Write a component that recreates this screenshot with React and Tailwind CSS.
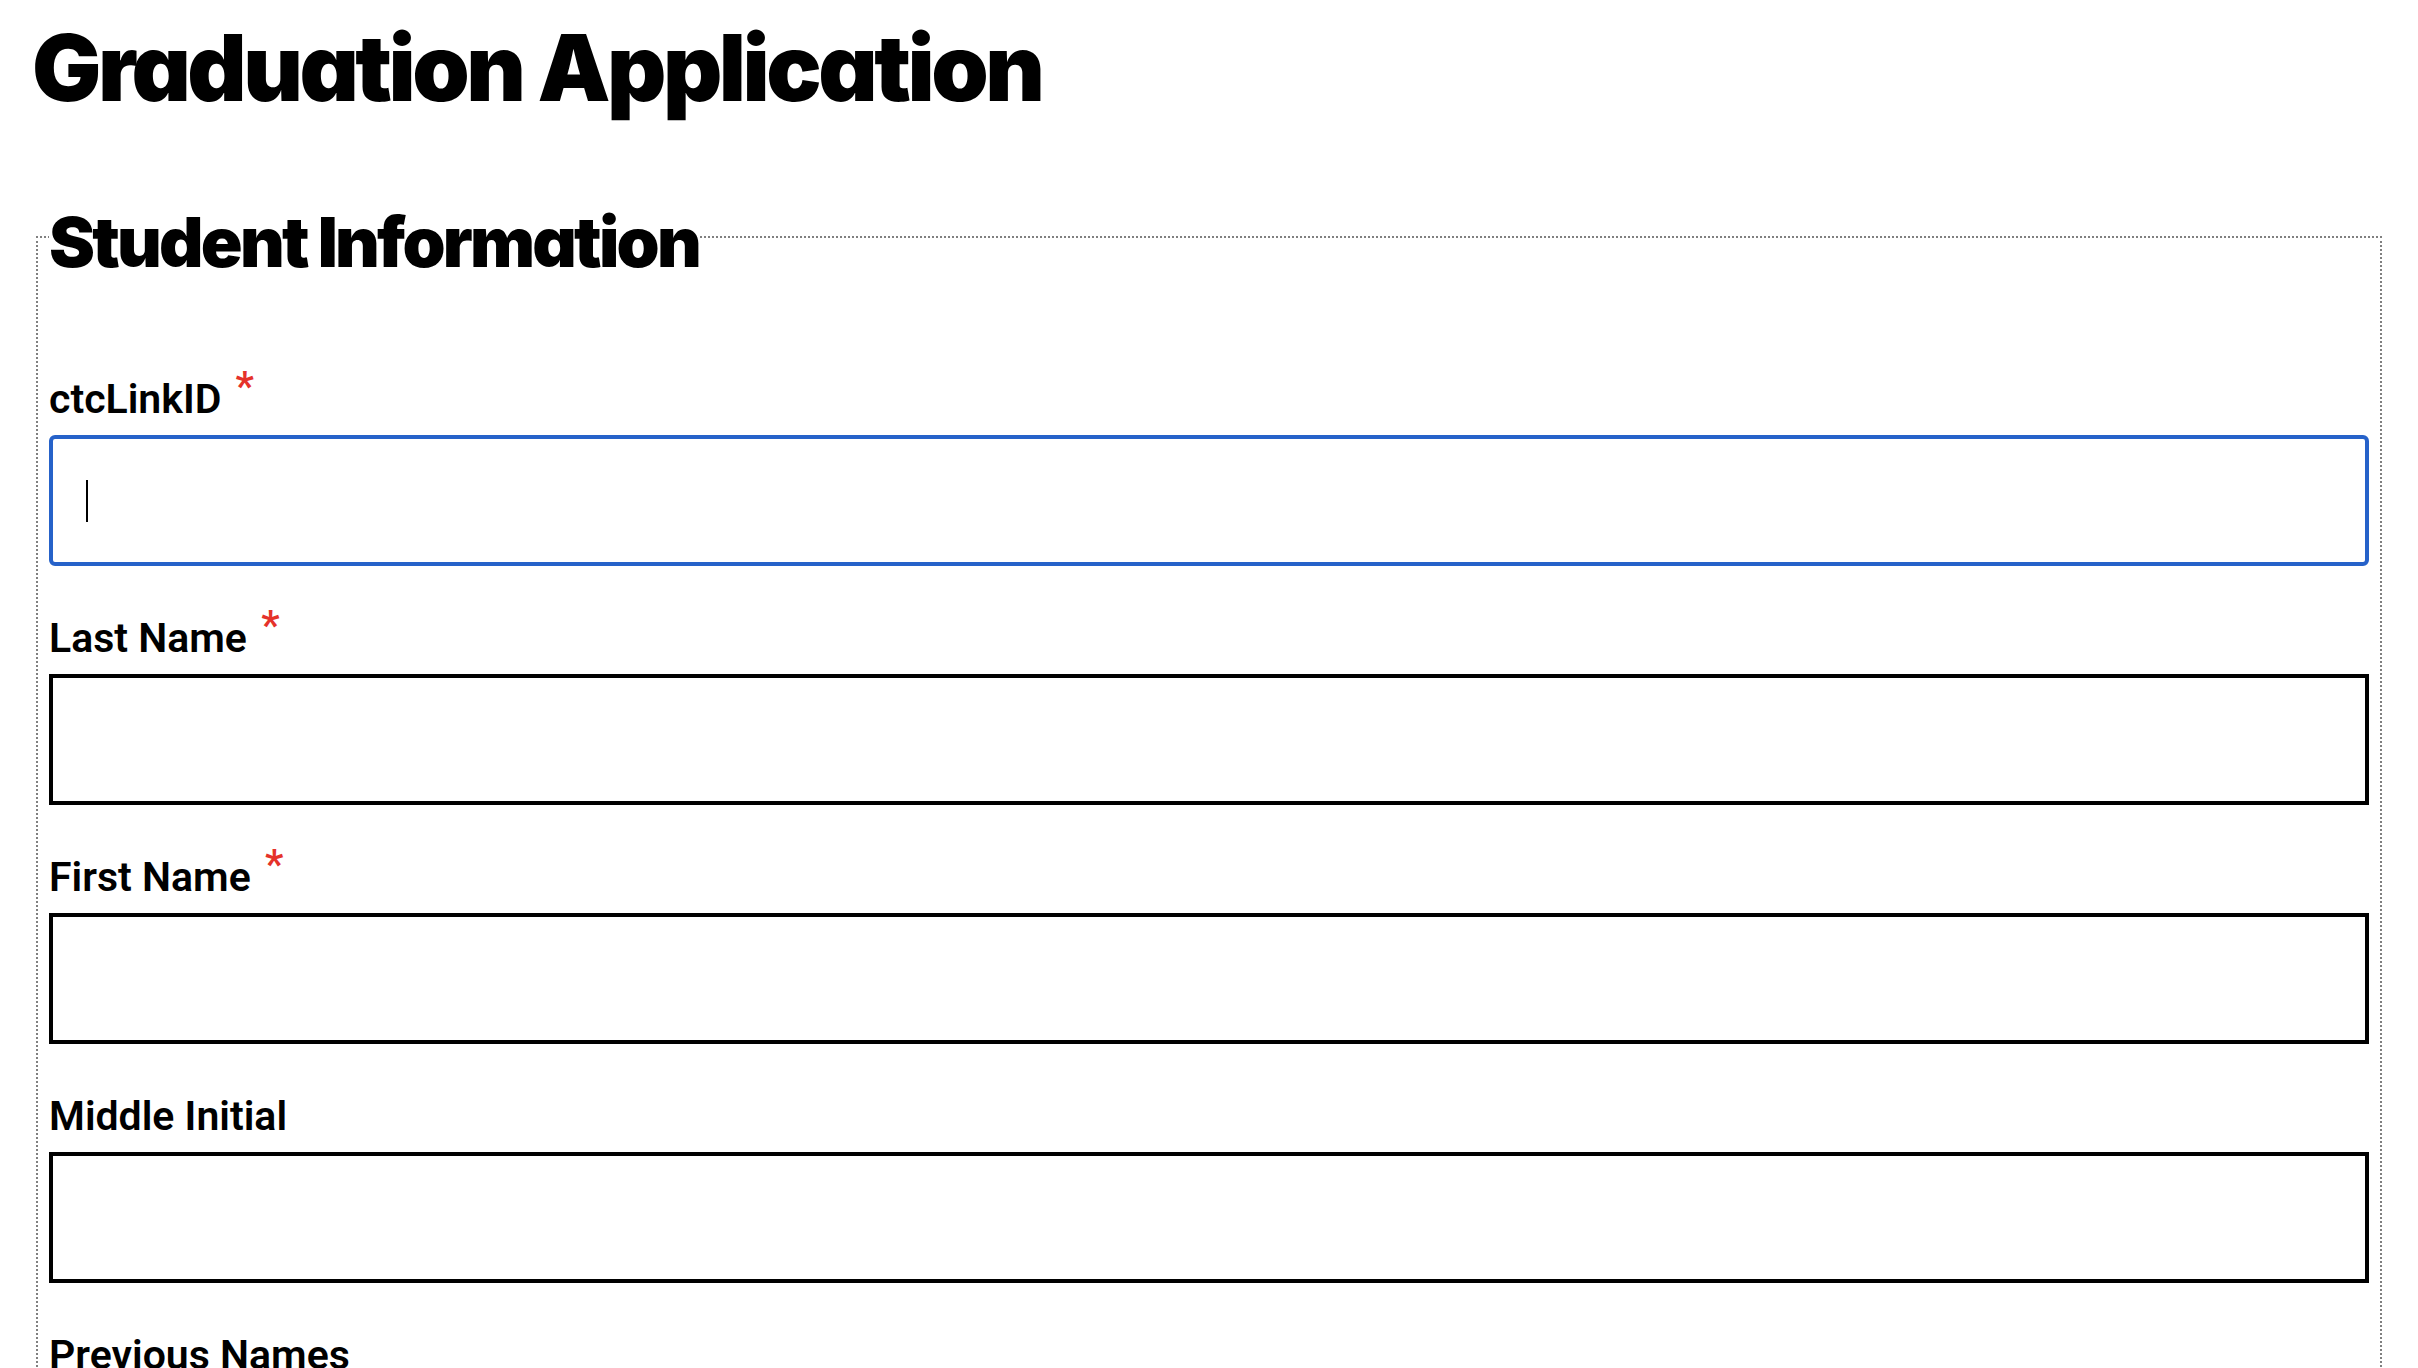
const fields = [
  { id: "ctclink", label: "ctcLinkID", required: true, focused: true },
  { id: "last", label: "Last Name", required: true },
  { id: "first", label: "First Name", required: true },
  { id: "middle", label: "Middle Initial" },
  { id: "previous", label: "Previous Names" },
  { id: "email", label: "Email", required: true },
];

const Field = ({ id, label, required, focused }) => (
  <div className="mb-12">
    <label
      htmlFor={id}
      className="mb-3 block font-['Roboto',sans-serif] text-[41px] font-semibold leading-[48px] text-black"
    >
      {label}
      {required && (
        <span className="ml-1 align-[13px] leading-[0] text-[#e5322a]"> *</span>
      )}
    </label>
    <div className="relative">
      <input
        id={id}
        type="text"
        autoFocus={focused}
        className={
          focused
            ? "block h-[131px] w-full rounded-md border-4 border-[#2662c9] bg-white px-[33px] font-['Roboto',sans-serif] text-[36px] text-black caret-black outline-none"
            : "block h-[131px] w-full border-4 border-black bg-white px-[33px] font-['Roboto',sans-serif] text-[36px] text-black caret-black outline-none"
        }
      />
      {/* caret shown in the focused field */}
      {focused && (
        <span className="pointer-events-none absolute left-[37px] top-[45px] h-[42px] w-[2px] bg-black" />
      )}
    </div>
  </div>
);

const App = () => {
  return (
    <div className="min-h-screen bg-white px-8 pt-[22px] text-black">
      <h1 className="font-['Inter',sans-serif] text-[92px] font-black leading-none tracking-[-0.038em] [font-feature-settings:'cv11']">
        Graduation Application
      </h1>

      <form onSubmit={(e) => e.preventDefault()}>
        <fieldset className="mx-1 mt-[82px] border-2 border-dotted border-[#808080] px-[11px]">
          <legend className="pt-3 font-['Inter',sans-serif] text-[69px] font-black leading-none tracking-[-0.04em] [font-feature-settings:'cv11']">
            Student Information
          </legend>
          <div className="pt-[98px]">
            {fields.map((f) => (
              <Field key={f.id} {...f} />
            ))}
          </div>
        </fieldset>
      </form>
    </div>
  );
};

export default App;
